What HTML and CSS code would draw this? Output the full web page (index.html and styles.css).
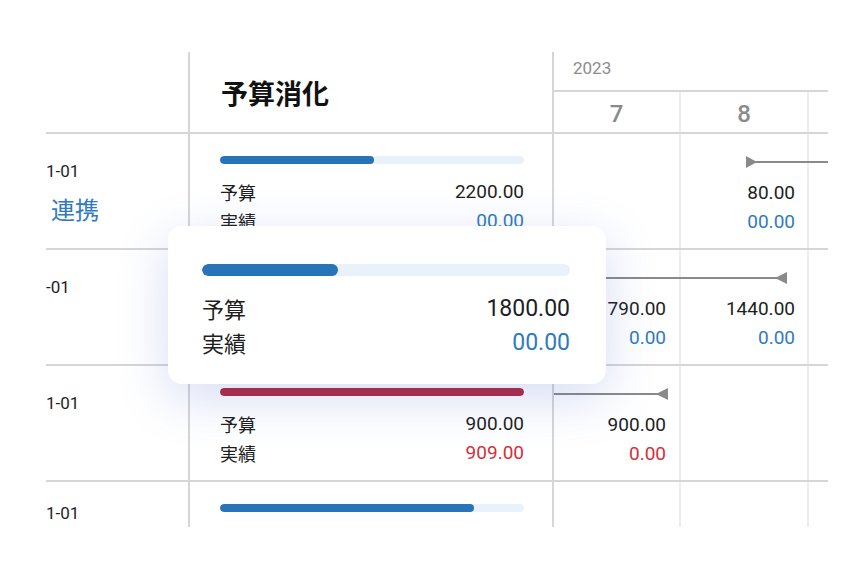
FILE: index.html
```html
<!DOCTYPE html>
<html lang="ja">

<head>
    <meta charset="UTF-8">
    <meta name="viewport" content="width=device-width, initial-scale=1.0">
    <title>予算消化</title>
    <link rel="stylesheet" href="styles.css">
</head>

<body>
    <div class="stage">
        <div class="board">
            <!-- Header -->
            <div class="row head">
                <div class="cell name"></div>
                <div class="cell budget title">予算消化</div>
                <div class="time-head">
                    <div class="year">2023</div>
                    <div class="months">
                        <div class="month">7</div>
                        <div class="month">8</div>
                        <div class="month"></div>
                    </div>
                </div>
            </div>

            <!-- Row 1 -->
            <div class="row">
                <div class="cell name">
                    <div class="date">1-01</div>
                    <div class="link">連携</div>
                </div>
                <div class="cell budget">
                    <div class="bar"><div class="fill" style="width: 50.6%"></div></div>
                    <div class="line"><span>予算</span><span class="num">2200.00</span></div>
                    <div class="line"><span>実績</span><span class="num blue">00.00</span></div>
                </div>
                <div class="cell month-cell m7"></div>
                <div class="cell month-cell m8">
                    <span class="num">80.00</span>
                    <span class="num blue">00.00</span>
                </div>
                <div class="cell month-cell m9"></div>
                <div class="track">
                    <div class="span start" style="left: 192px; width: 90px"></div>
                </div>
            </div>

            <!-- Row 2 -->
            <div class="row">
                <div class="cell name">
                    <div class="date">-01</div>
                </div>
                <div class="cell budget"></div>
                <div class="cell month-cell m7">
                    <span class="num">790.00</span>
                    <span class="num blue">0.00</span>
                </div>
                <div class="cell month-cell m8">
                    <span class="num">1440.00</span>
                    <span class="num blue">0.00</span>
                </div>
                <div class="cell month-cell m9"></div>
                <div class="track">
                    <div class="span end" style="left: 0; width: 233px"></div>
                </div>
            </div>

            <!-- Row 3 -->
            <div class="row">
                <div class="cell name">
                    <div class="date">1-01</div>
                </div>
                <div class="cell budget">
                    <div class="bar over"><div class="fill" style="width: 100%"></div></div>
                    <div class="line"><span>予算</span><span class="num">900.00</span></div>
                    <div class="line"><span>実績</span><span class="num red">909.00</span></div>
                </div>
                <div class="cell month-cell m7">
                    <span class="num">900.00</span>
                    <span class="num red">0.00</span>
                </div>
                <div class="cell month-cell m8"></div>
                <div class="cell month-cell m9"></div>
                <div class="track">
                    <div class="span end" style="left: 0; width: 114px"></div>
                </div>
            </div>

            <!-- Row 4 -->
            <div class="row last">
                <div class="cell name">
                    <div class="date">1-01</div>
                </div>
                <div class="cell budget">
                    <div class="bar"><div class="fill" style="width: 83.5%"></div></div>
                </div>
                <div class="cell month-cell m7"></div>
                <div class="cell month-cell m8"></div>
                <div class="cell month-cell m9"></div>
            </div>
        </div>

        <!-- Hover card -->
        <div class="tooltip">
            <div class="bar"><div class="fill" style="width: 37%"></div></div>
            <div class="line"><span>予算</span><span class="num">1800.00</span></div>
            <div class="line"><span>実績</span><span class="num blue">00.00</span></div>
        </div>
    </div>
</body>

</html>
```

FILE: styles.css
```css
body {
    margin: 0;
    background-color: #fff;
    font-family: Roboto, "Noto Sans CJK JP", sans-serif;
    color: #1e1e1e;
}

.stage {
    position: relative;
    width: 856px;
    height: 570px;
}

.board {
    position: absolute;
    left: 46px;
    top: 52px;
    width: 782px;
    height: 475px;
    overflow: hidden;
}

.row {
    display: grid;
    grid-template-columns: 144px 364px 127px 128px 1fr;
    box-sizing: border-box;
    height: 116px;
    border-bottom: 2px solid #d6d6d6;
}

.row.head {
    height: 82px;
}

.cell {
    grid-row: 1;
    box-sizing: border-box;
}

.name {
    grid-column: 1;
    border-right: 2px solid #d6d6d6;
    padding-top: 26px;
}

.row.last .name {
    padding-top: 20px;
}

.budget {
    grid-column: 2;
    border-right: 2px solid #d6d6d6;
    padding: 22px 28px 0 30px;
}

.title {
    display: flex;
    align-items: center;
    padding: 0 0 0 31px;
    font-size: 27px;
    font-weight: 700;
    color: #111;
}

.date {
    font-size: 17px;
    line-height: 22px;
}

.link {
    margin-top: 14px;
    padding-left: 5px;
    font-size: 24px;
    line-height: 30px;
    color: #2f7bbd;
}

/* Time header */
.time-head {
    grid-column: 3 / 6;
    grid-row: 1;
    display: flex;
    flex-direction: column;
}

.year {
    height: 40px;
    box-sizing: border-box;
    padding: 6px 0 0 19px;
    font-size: 17px;
    color: #8c8c8c;
    border-bottom: 2px solid #d6d6d6;
}

.months {
    flex: 1;
    display: grid;
    grid-template-columns: 127px 128px 1fr;
}

.month {
    display: flex;
    align-items: center;
    justify-content: center;
    padding-top: 3px;
    font-size: 24px;
    font-weight: 500;
    color: #8a8a8a;
    border-right: 2px solid #ededed;
}

.month:last-child {
    border-right: none;
}

/* Budget bars */
.bar {
    height: 8px;
    border-radius: 4px;
    background-color: #e9f1fa;
    overflow: hidden;
    margin-bottom: 13px;
}

.fill {
    height: 100%;
    border-radius: 4px;
    background-color: #2774b8;
}

.bar.over .fill {
    background-color: #b3263a;
}

.line {
    display: flex;
    justify-content: space-between;
    align-items: center;
    height: 29px;
    font-size: 18px;
}

.num {
    font-size: 19px;
}

.blue {
    color: #2f7bbd;
}

.red {
    color: #d3303b;
}

/* Month cells */
.month-cell {
    display: flex;
    flex-direction: column;
    align-items: flex-end;
    padding: 44px 13px 0 0;
    border-right: 2px solid #ededed;
    line-height: 29px;
}

.m7 {
    grid-column: 3;
}

.m8 {
    grid-column: 4;
    padding-right: 12px;
}

.m9 {
    grid-column: 5;
    border-right: none;
}

/* Timeline spans */
.track {
    grid-column: 3 / 6;
    grid-row: 1;
    position: relative;
}

.span {
    position: absolute;
    top: 27px;
    height: 2px;
    background-color: #8a8a8a;
}

.span.start::before,
.span.end::after {
    content: "";
    position: absolute;
    top: -5px;
    border-top: 6px solid transparent;
    border-bottom: 6px solid transparent;
}

.span.start::before {
    left: 0;
    border-left: 11px solid #8a8a8a;
}

.span.end::after {
    right: 0;
    border-right: 12px solid #8a8a8a;
}

/* Hover card */
.tooltip {
    position: absolute;
    left: 168px;
    top: 226px;
    width: 438px;
    height: 158px;
    box-sizing: border-box;
    padding: 38px 36px 0 34px;
    background-color: #fff;
    border-radius: 14px;
    box-shadow: 0 14px 50px rgba(70, 100, 210, 0.22);
}

.tooltip .bar {
    height: 12px;
    border-radius: 6px;
    margin-bottom: 15px;
}

.tooltip .fill {
    border-radius: 6px;
}

.tooltip .line {
    height: 34px;
    font-size: 22px;
}

.tooltip .num {
    font-size: 23px;
}
```
